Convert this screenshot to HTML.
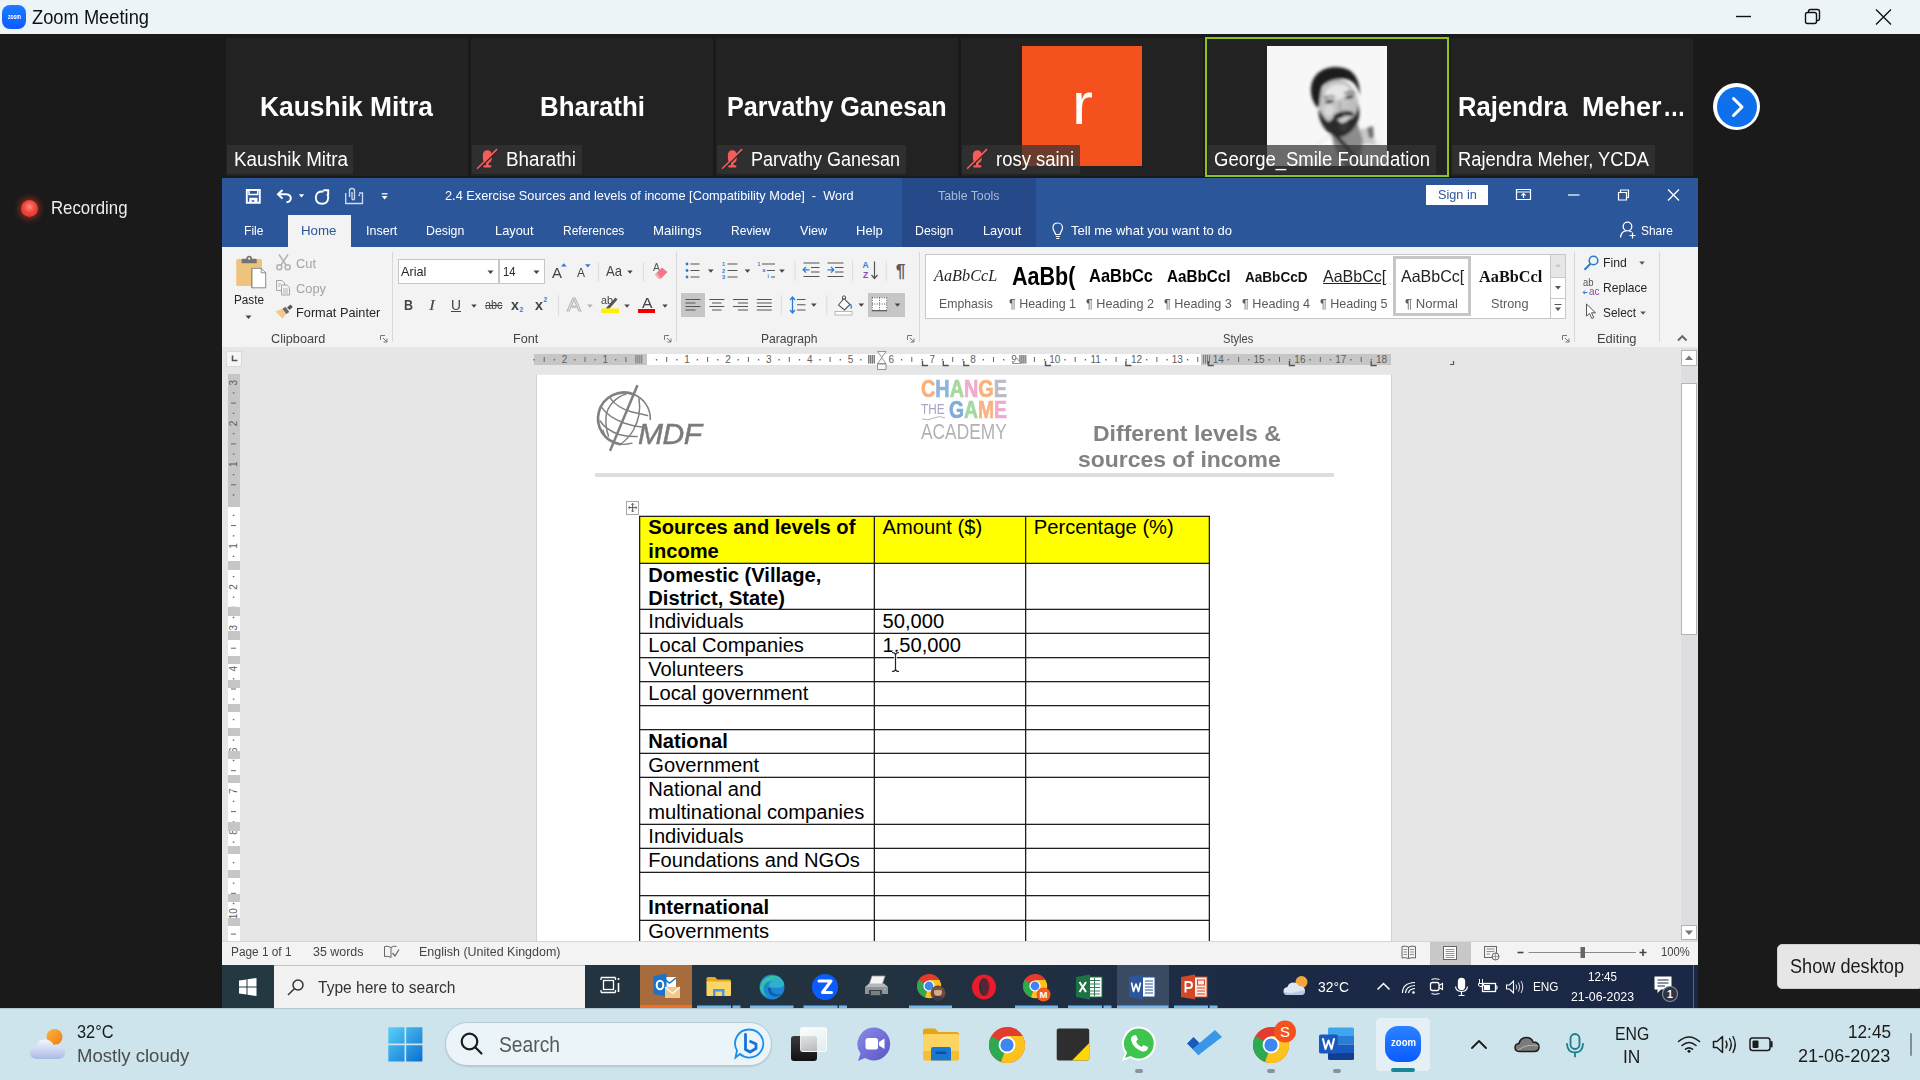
<!DOCTYPE html>
<html lang="en"><head><meta charset="utf-8"><title>Zoom Meeting</title>
<style>
*{box-sizing:border-box;margin:0;padding:0}
html,body{width:1920px;height:1080px;overflow:hidden;background:#1a1a1a;font-family:"Liberation Sans",sans-serif;}
.a{position:absolute;white-space:nowrap;line-height:1}
.t{position:absolute;white-space:nowrap;line-height:1;transform-origin:0 0}
svg{position:absolute;overflow:visible}
#zt{left:0;top:0;width:1920px;height:34px;background:#edf4f8}
.tile{position:absolute;top:38px;height:138px;background:#222222}
.lbl{position:absolute;left:1px;bottom:2.5px;height:29px;background:rgba(52,52,52,.72);border-radius:1px}
.w{color:#fff}
.gl{color:#444;font-size:12.5px}
</style></head><body>
<!-- Zoom title bar -->
<div class="a" id="zt"></div>
<div class="a" style="left:2px;top:5px;width:24px;height:24px;border-radius:8px;background:linear-gradient(180deg,#1f7bff,#0b5cff)"></div>
<span class="t" style="transform:scaleX(0.7111);left:7.5px;top:13px;font-size:7px;color:#fff;font-weight:bold">zoom</span>
<span class="t" style="transform:scaleX(0.9387);left:32px;top:8px;font-size:19.5px;color:#111">Zoom Meeting</span>
<svg style="left:1730px;top:4px" width="180" height="28" viewBox="0 0 180 28" fill="none" stroke="#111" stroke-width="1.4">
<path d="M6 12.5H21"/><rect x="75.5" y="8.5" width="11" height="11" rx="2"/><path d="M78.5 8.5V7.5Q78.5 5.5 80.5 5.5H87.5Q89.5 5.5 89.5 7.5V14.5Q89.5 16.5 87.5 16.5H86.5"/><path d="M146 5.5L161 20.5M161 5.5L146 20.5"/></svg>

<!-- participant tiles -->
<div class="tile" style="left:226px;width:242px"><div class="lbl" style="width:126px"></div></div>
<div class="tile" style="left:471px;width:242px"><div class="lbl" style="width:110px"></div></div>
<div class="tile" style="left:716px;width:242px"><div class="lbl" style="width:189px"></div></div>
<div class="tile" style="left:961px;width:242px"><div class="a" style="left:61px;top:8px;width:120px;height:120px;background:#f4511e"></div><div class="lbl" style="width:118px"></div></div>
<div class="tile" style="left:1205px;top:37px;width:244px;height:140px;border:2px solid #8cc321;background:#222"><div class="a" style="left:60px;top:7px;width:120px;height:120px;background:#f2f2f2;overflow:hidden">
<svg style="left:0;top:0" width="120" height="120" viewBox="0 0 120 120">
<defs><filter id="fb" x="-10%" y="-10%" width="120%" height="120%"><feGaussianBlur stdDeviation="1.5"/></filter><filter id="fb2"><feGaussianBlur stdDeviation="2.6"/></filter></defs>
<rect width="120" height="120" fill="#f7f7f7"/>
<g filter="url(#fb)">
<path d="M34 122C38 104 52 94 62 88L96 82C106 88 116 96 122 106V122Z" fill="#f1f1f1"/>
<path d="M40 112Q52 98 64 92L70 104Q60 110 56 122H36Z" fill="#fcfcfc"/>
<path d="M92 84Q100 80 104 86L110 100Q100 96 94 100Z" fill="#c9c9c9"/>
<path d="M100 82L106 80L107 92L102 92Z" fill="#6e6e6e"/>
<path d="M64 86L90 76L96 94L92 122H78L66 98Z" fill="#8c8c8c"/>
<path d="M66 89L69 87L91 111L89 115Z" fill="#2a2a2a"/>
<ellipse cx="72" cy="58" rx="19.5" ry="26" transform="rotate(-13 72 58)" fill="#c4c4c4"/>
<ellipse cx="70" cy="46" rx="12" ry="7.5" transform="rotate(-13 70 46)" fill="#e6e6e6"/>
<ellipse cx="62" cy="64" rx="5" ry="6" fill="#d8d8d8"/><ellipse cx="86" cy="59" rx="4" ry="6" fill="#bdbdbd"/>
<path d="M52 62C50 72 56 84 66 90C76 94 88 86 92 72C93 66 92 62 91 58C90 68 86 74 80 73C74 68 66 70 62 76C56 72 54 66 52 62Z" fill="#2b2b2b"/>
<path d="M66 70Q74 63 86 66Q88 70 84 70Q76 68 68 74Z" fill="#1d1d1d"/>
<path d="M70 73Q77 71 83 71Q80 77 74 77Z" fill="#d2d2d2"/>
<path d="M72 80Q78 80 82 77Q82 84 76 85Q72 84 72 80Z" fill="#3a3a3a"/>
<path d="M49 60C42 50 42 36 50 28C58 20 72 19 82 24C90 29 93 38 93 50C91 41 87 35 80 33.5C70 32 60 35 55 41C53 48 53 55 52 62Z" fill="#1c1c1c"/>
<ellipse cx="62.5" cy="55.5" rx="4.5" ry="1.8" transform="rotate(-12 62.5 55.5)" fill="#3c3c3c"/><ellipse cx="82.5" cy="51" rx="4.5" ry="1.8" transform="rotate(-12 82.5 51)" fill="#3c3c3c"/>
<path d="M57 52Q62 49 68 51" stroke="#555" stroke-width="1.6" fill="none"/><path d="M77 47.5Q83 45 88 47" stroke="#555" stroke-width="1.6" fill="none"/>
<path d="M73 56Q72 62 74 65Q77 66 80 64" stroke="#9a9a9a" stroke-width="1.5" fill="none"/>
</g>
</svg></div><div class="lbl" style="left:1px;bottom:1px;width:228px"></div></div>
<div class="tile" style="left:1451px;width:242px"><div class="lbl" style="width:203px"></div></div>

<span class="t w" style="transform:scaleX(0.9422);left:260px;top:93px;font-size:28px;font-weight:bold">Kaushik Mitra</span>
<span class="t w" style="transform:scaleX(0.9245);left:540px;top:93px;font-size:28px;font-weight:bold">Bharathi</span>
<span class="t w" style="transform:scaleX(0.8983);left:726.5px;top:93px;font-size:28px;font-weight:bold">Parvathy Ganesan</span>
<span class="t w" style="transform:scaleX(0.9138);left:1458.3px;top:93px;font-size:28px;font-weight:bold">Rajendra</span><span class="t w" style="transform:scaleX(0.9640);left:1581.5px;top:93px;font-size:28px;font-weight:bold">Meher</span><span class="t w" style="transform:scaleX(0.8161);left:1663.5px;top:93px;font-size:28px;font-weight:bold;letter-spacing:1px">...</span>
<span class="t w" style="transform:scaleX(1.0508);left:1071.5px;top:74px;font-size:60px">r</span>

<span class="t w" style="transform:scaleX(0.9651);left:233.5px;top:150px;font-size:19.5px">Kaushik Mitra</span>
<span class="t w" style="transform:scaleX(0.9636);left:505.5px;top:150px;font-size:19.5px">Bharathi</span>
<span class="t w" style="transform:scaleX(0.9225);left:750.5px;top:150px;font-size:19.5px">Parvathy Ganesan</span>
<span class="t w" style="transform:scaleX(0.9469);left:995.5px;top:150px;font-size:19.5px">rosy saini</span>
<span class="t w" style="transform:scaleX(0.9489);left:1213.5px;top:150px;font-size:19.5px">George_Smile Foundation</span>
<span class="t w" style="transform:scaleX(0.9389);left:1458px;top:150px;font-size:19.5px">Rajendra Meher, YCDA</span>

<!-- muted mic icons -->
<svg style="left:476px;top:148px" width="22" height="22" viewBox="0 0 22 22"><g fill="#f75c5c"><rect x="6.9" y="2.2" width="8.8" height="13" rx="4.4"/><rect x="10" y="14.5" width="2.6" height="3.5"/><rect x="7.2" y="17.2" width="8.2" height="2.2" rx=".8"/></g><path d="M22.3 1.6L2.3 21.3" stroke="#2b2b2b" stroke-width="1.8"/><path d="M21.1 1.1L1.1 20.8" stroke="#f75c5c" stroke-width="1.6"/></svg>
<svg style="left:721px;top:148px" width="22" height="22" viewBox="0 0 22 22"><g fill="#f75c5c"><rect x="6.9" y="2.2" width="8.8" height="13" rx="4.4"/><rect x="10" y="14.5" width="2.6" height="3.5"/><rect x="7.2" y="17.2" width="8.2" height="2.2" rx=".8"/></g><path d="M22.3 1.6L2.3 21.3" stroke="#2b2b2b" stroke-width="1.8"/><path d="M21.1 1.1L1.1 20.8" stroke="#f75c5c" stroke-width="1.6"/></svg>
<svg style="left:966px;top:148px" width="22" height="22" viewBox="0 0 22 22"><g fill="#f75c5c"><rect x="6.9" y="2.2" width="8.8" height="13" rx="4.4"/><rect x="10" y="14.5" width="2.6" height="3.5"/><rect x="7.2" y="17.2" width="8.2" height="2.2" rx=".8"/></g><path d="M22.3 1.6L2.3 21.3" stroke="#2b2b2b" stroke-width="1.8"/><path d="M21.1 1.1L1.1 20.8" stroke="#f75c5c" stroke-width="1.6"/></svg>

<!-- next arrow -->
<div class="a" style="left:1713px;top:83px;width:47px;height:47px;border-radius:50%;background:#fff"></div>
<div class="a" style="left:1716.5px;top:86.5px;width:40px;height:40px;border-radius:50%;background:#0e71eb"></div>
<svg style="left:1716.5px;top:86.5px" width="40" height="40" viewBox="0 0 40 40" fill="none" stroke="#fff" stroke-width="3" stroke-linecap="round" stroke-linejoin="round"><path d="M16.5 11.5L25 20L16.5 28.5"/></svg>

<!-- recording -->
<div class="a" style="left:21px;top:199.5px;width:17px;height:17px;border-radius:50%;background:radial-gradient(circle at 50% 40%,#ff8a80 0,#f0443a 45%,#e0362e 100%);box-shadow:0 0 6px 2px rgba(230,60,40,.55)"></div>
<span class="t" style="transform:scaleX(0.9072);left:51px;top:199.2px;font-size:18.5px;color:#ededed">Recording</span>
<!-- Word window chrome -->
<div class="a" style="left:222px;top:178px;width:1476px;height:69px;background:#2b579a"></div>
<div class="a" style="left:902px;top:178px;width:133.5px;height:69px;background:#26498a"></div>
<div class="a" style="left:288px;top:215px;width:62.5px;height:33px;background:#f3f3f3"></div>
<!-- QAT icons -->
<svg style="left:240px;top:182px" width="160" height="28" viewBox="0 0 160 28" fill="none" stroke="#fff" stroke-width="1.9">
<path d="M6.8 8H19.8V20.8H6.8Z"/><path d="M9 8.5V12.5H17.7V8.5" stroke-width="1.5"/><path d="M9.3 15.8H17.5V20.5H14.2V18.3H11.7V20.5H9.3Z" fill="#fff" stroke="none"/>
<path d="M42.5 8L38 12.3L42.5 16.6" stroke-width="2" stroke-linejoin="miter"/><path d="M38.5 12.3H46Q51 12.8 50.8 16.5Q50.5 19.8 46.5 20.3" stroke-width="2"/>
<path d="M58.8 12.3L61.5 15.6L64.2 12.3Z" fill="#fff" stroke="none"/>
<path d="M83.5 9.5Q76 9 75.8 15.5Q76 21.7 82 21.7Q88 21.7 88.2 15.5Q88.2 13.5 87 12" stroke-width="1.9"/><path d="M83.3 8.3H88.2V13.2" stroke-width="1.9"/>
<path d="M105.7 11V21.5H122.5V11H119" stroke="#cfdcf2" stroke-width="1.3"/><path d="M109.5 15V8.5Q109.5 6.5 112 6.5Q114.5 6.5 114.5 8.5V16.5Q114.5 17.8 113.2 17.8Q112 17.8 112 16.5V10" stroke="#cfdcf2" stroke-width="1.3"/><circle cx="119.3" cy="13.2" r=".9" fill="#cfdcf2" stroke="none"/>
<path d="M141.7 11.8H147.5" stroke-width="1.3"/><path d="M141.7 14L144.6 17.6L147.5 14Z" fill="#fff" stroke="none"/>
</svg>
<span class="t w" style="transform:scaleX(0.9821);left:444.5px;top:188.5px;font-size:13px">2.4 Exercise Sources and levels of income [Compatibility Mode]&nbsp; -&nbsp; Word</span>
<span class="t" style="transform:scaleX(0.9489);left:938px;top:189px;font-size:13px;color:#a9bad6">Table Tools</span>
<!-- tabs -->
<span class="t w" style="transform:scaleX(0.8959);left:243.8px;top:224px;font-size:13.5px">File</span>
<span class="t" style="transform:scaleX(0.9857);left:301.3px;top:224px;font-size:13.5px;color:#2b579a">Home</span>
<span class="t w" style="transform:scaleX(0.9270);left:365.8px;top:224px;font-size:13.5px">Insert</span>
<span class="t w" style="transform:scaleX(0.9112);left:426.3px;top:224px;font-size:13.5px">Design</span>
<span class="t w" style="transform:scaleX(0.9495);left:494.5px;top:224px;font-size:13.5px">Layout</span>
<span class="t w" style="transform:scaleX(0.8878);left:562.5px;top:224px;font-size:13.5px">References</span>
<span class="t w" style="transform:scaleX(0.9792);left:653.3px;top:224px;font-size:13.5px">Mailings</span>
<span class="t w" style="transform:scaleX(0.8923);left:731.3px;top:224px;font-size:13.5px">Review</span>
<span class="t w" style="transform:scaleX(0.9300);left:800px;top:224px;font-size:13.5px">View</span>
<span class="t w" style="transform:scaleX(0.9652);left:856.3px;top:224px;font-size:13.5px">Help</span>
<span class="t w" style="transform:scaleX(0.9112);left:915px;top:224px;font-size:13.5px">Design</span>
<span class="t w" style="transform:scaleX(0.9446);left:983px;top:224px;font-size:13.5px">Layout</span>
<svg style="left:1050px;top:221px" width="16" height="20" viewBox="0 0 16 20" fill="none" stroke="#fff" stroke-width="1.2"><path d="M5.5 13.5C5.5 11 3 10 3 6.8C3 4 5 2 7.8 2C10.5 2 12.5 4 12.5 6.8C12.5 10 10 11 10 13.5Z"/><path d="M5.8 15.5H9.8M6.3 17.5H9.3"/></svg>
<span class="t w" style="transform:scaleX(0.9664);left:1071.3px;top:224px;font-size:13.5px">Tell me what you want to do</span>
<!-- right controls -->
<div class="a" style="left:1425.8px;top:185px;width:62.5px;height:20px;background:#fff"></div>
<span class="t" style="transform:scaleX(0.9399);left:1437.5px;top:188px;font-size:13.5px;color:#2b579a">Sign in</span>
<svg style="left:1510px;top:184px" width="180" height="22" viewBox="0 0 180 22" fill="none" stroke="#fff" stroke-width="1.2">
<path d="M6.5 5.5H20.5V15.5H6.5ZM6.5 8H20.5"/><path d="M13.5 14V9.8M11.5 11.5L13.5 9.5L15.5 11.5" stroke-width="1.1"/>
<path d="M58 11H69.5"/>
<path d="M108.5 8.5H116.5V16H108.5ZM110.5 8.5V6H118.5V13.5H116.5"/>
<path d="M158 5.5L169 16.5M169 5.5L158 16.5" stroke-width="1.3"/>
</svg>
<svg style="left:1618px;top:220px" width="20" height="20" viewBox="0 0 20 20" fill="none" stroke="#fff" stroke-width="1.3"><circle cx="9.5" cy="6.5" r="4.3"/><path d="M2.5 17.5Q3 11.5 8 10.8M11 10.8Q12.5 11 13.5 12"/><path d="M14.5 12.5V18.5M11.5 15.5H17.5" stroke-width="1.2"/></svg>
<span class="t w" style="transform:scaleX(0.8826);left:1640.8px;top:224px;font-size:13.5px">Share</span>
<!-- ribbon body -->
<div class="a" style="left:222px;top:247px;width:1476px;height:100.7px;background:#f3f3f3;border-bottom:1px solid #dadada"></div>
<!-- group separators -->
<div class="a" style="left:392px;top:252px;width:1px;height:90px;background:#d8d8d8"></div>
<div class="a" style="left:676px;top:252px;width:1px;height:90px;background:#d8d8d8"></div>
<div class="a" style="left:919px;top:252px;width:1px;height:90px;background:#d8d8d8"></div>
<div class="a" style="left:1574px;top:252px;width:1px;height:90px;background:#d8d8d8"></div>
<div class="a" style="left:1659px;top:252px;width:1px;height:90px;background:#d8d8d8"></div>
<!-- Clipboard -->
<svg style="left:234px;top:255px" width="36" height="36" viewBox="0 0 36 36">
<rect x="2.2" y="3.9" width="25.8" height="27" rx="1.6" fill="#eec47c"/><path d="M7.6 4.5Q7.6 3.8 8.3 3.8H12.3Q12.5 .8 15.2 .8Q17.9 .8 18.1 3.8H22Q22.7 3.8 22.7 4.5V8.3H7.6Z" fill="#737373"/><circle cx="15.2" cy="3.6" r="1.1" fill="#fff"/>
<path d="M17.8 13.3H27.2L31.7 17.8V32.8H17.8Z" fill="#fff" stroke="#8a8a8a" stroke-width="1"/><path d="M17.8 13.3V32.8" stroke="#8a9468" stroke-width="1"/><path d="M27.2 13.3V17.8H31.7" fill="none" stroke="#8a8a8a" stroke-width="1"/></svg>
<span class="t" style="transform:scaleX(0.8688);left:234.3px;top:292.7px;font-size:13.5px;color:#262626">Paste</span>
<svg style="left:245px;top:315px" width="8" height="5" viewBox="0 0 8 5"><path d="M.5 .5L3.5 4L6.5 .5Z" fill="#444"/></svg>
<svg style="left:275px;top:253px" width="18" height="19" viewBox="0 0 18 19" fill="none" stroke="#b2b2b2" stroke-width="1.5"><path d="M4 1.5L11 12M13 1.5L6 12"/><circle cx="4.3" cy="14.3" r="2.5"/><circle cx="12.7" cy="14.3" r="2.5"/></svg>
<span class="t" style="transform:scaleX(0.9517);left:295.8px;top:256.5px;font-size:13.5px;color:#a3a3a3">Cut</span>
<svg style="left:275px;top:279px" width="18" height="18" viewBox="0 0 18 18" fill="#f3f3f3" stroke="#a6a6a6" stroke-width="1"><path d="M1.5 1.5H7L9.5 4V11.5H1.5Z"/><path d="M6.5 6H12L14.5 8.5V16H6.5Z"/><path d="M8 10H13M8 12H13M8 14H13M3 5H6M3 7H5" stroke-width=".8"/></svg>
<span class="t" style="transform:scaleX(0.9519);left:295.8px;top:281.6px;font-size:13.5px;color:#a3a3a3">Copy</span>
<svg style="left:275px;top:303px" width="20" height="18" viewBox="0 0 20 18"><path d="M.5 8.5L8 5.5L11.5 10.5L7.5 15.5Z" fill="#f0c88a"/><path d="M7.5 5.8L10.5 3.8L14.3 9L11.3 11Z" fill="#6a6a6a"/><path d="M12 4.5L15.5 1.5L17.8 4L14.5 7Z" fill="#585858"/></svg>
<span class="t" style="transform:scaleX(0.9442);left:295.8px;top:306.4px;font-size:13.5px;color:#262626">Format Painter</span>
<span class="t gl" style="transform:scaleX(0.9756);left:271.3px;top:331.9px;font-size:13px">Clipboard</span>
<svg style="left:380px;top:335px" width="8" height="8" viewBox="0 0 8 8" fill="none" stroke="#777" stroke-width="1" id="dl"><path d="M.5 5V.5H5M3 3L7 7M7 3.5V7H3.5"/></svg>
<!-- Font group -->
<div class="a" style="left:397.5px;top:259px;width:101px;height:24.8px;background:#fff;border:1px solid #c6c6c6"></div>
<div class="a" style="left:499.3px;top:259px;width:45.5px;height:24.8px;background:#fff;border:1px solid #c6c6c6"></div>
<span class="t" style="transform:scaleX(0.9365);left:400.5px;top:265px;font-size:13.5px;color:#262626">Arial</span>
<span class="t" style="transform:scaleX(0.8316);left:502.5px;top:265px;font-size:13.5px;color:#262626">14</span>
<svg style="left:486.5px;top:269.5px" width="8" height="5" viewBox="0 0 8 5"><path d="M.5 .5L3.5 4L6.5 .5Z" fill="#444"/></svg>
<svg style="left:533.3px;top:269.5px" width="8" height="5" viewBox="0 0 8 5"><path d="M.5 .5L3.5 4L6.5 .5Z" fill="#444"/></svg>
<span class="t" style="transform:scaleX(0.9984);left:551.5px;top:264.5px;font-size:15px;color:#444">A</span>
<svg style="left:560.5px;top:263px" width="6" height="4" viewBox="0 0 6 4"><path d="M0 3.5L2.8 .3L5.6 3.5Z" fill="#2b7cd3"/></svg>
<span class="t" style="transform:scaleX(0.9225);left:576.5px;top:266px;font-size:13px;color:#444">A</span>
<svg style="left:584.5px;top:263.5px" width="6" height="4" viewBox="0 0 6 4"><path d="M0 .3L2.8 3.5L5.6 .3Z" fill="#2b7cd3"/></svg>
<div class="a" style="left:597.5px;top:262px;width:1px;height:20px;background:#dcdcdc"></div>
<span class="t" style="transform:scaleX(0.9014);left:606px;top:263.5px;font-size:14.5px;color:#444">Aa</span>
<svg style="left:626.5px;top:269.5px" width="7" height="5" viewBox="0 0 7 5"><path d="M.3 .5L3 3.8L5.7 .5Z" fill="#444"/></svg>
<div class="a" style="left:642.5px;top:262px;width:1px;height:20px;background:#dcdcdc"></div>
<span class="t" style="transform:scaleX(0.9532);left:653px;top:262px;font-size:11px;color:#555">A</span>
<svg style="left:652px;top:264px" width="18" height="16" viewBox="0 0 18 16"><path d="M3 10.5L10 3.5L15.5 8L9 14.5H6.5Z" fill="#f0768b"/><path d="M3 10.5L6.5 14.5H9L5 9Z" fill="#f6a9b6"/></svg>
<!-- row 2 -->
<span class="t" style="transform:scaleX(0.8584);left:403.5px;top:297.5px;font-size:14.5px;font-weight:bold;color:#444">B</span>
<span class="t" style="transform:scaleX(1.2387);left:429px;top:297.5px;font-size:14.5px;font-style:italic;font-family:'Liberation Serif',serif;color:#444">I</span>
<span class="t" style="transform:scaleX(0.9877);left:450.5px;top:297.5px;font-size:14px;color:#444;text-decoration:underline">U</span>
<svg style="left:470.5px;top:303.5px" width="7" height="5" viewBox="0 0 7 5"><path d="M.3 .5L3 3.8L5.7 .5Z" fill="#444"/></svg>
<span class="t" style="transform:scaleX(0.8682);left:484.5px;top:299px;font-size:12.5px;color:#444;text-decoration:line-through">abc</span>
<span class="t" style="transform:scaleX(0.9903);left:510.5px;top:297.5px;font-size:14.5px;font-weight:bold;color:#444">x</span><span class="t" style="left:519.5px;top:306.5px;font-size:6.5px;color:#2b7cd3;font-weight:bold">2</span>
<span class="t" style="transform:scaleX(0.9903);left:534.5px;top:297.5px;font-size:14.5px;font-weight:bold;color:#444">x</span><span class="t" style="left:543.5px;top:297px;font-size:6.5px;color:#2b7cd3;font-weight:bold">2</span>
<div class="a" style="left:557.5px;top:295px;width:1px;height:21px;background:#dcdcdc"></div>
<span class="t" style="transform:scaleX(1.1034);left:567px;top:295px;font-size:19px;color:#f3f3f3;-webkit-text-stroke:1px #b9b9b9">A</span>
<svg style="left:587px;top:303.5px" width="7" height="5" viewBox="0 0 7 5"><path d="M.3 .5L3 3.8L5.7 .5Z" fill="#b0b0b0"/></svg>
<span class="t" style="transform:scaleX(0.9796);left:601px;top:294.5px;font-size:11px;color:#444">ab</span>
<svg style="left:601px;top:294px" width="20" height="20" viewBox="0 0 20 20"><path d="M5.5 13.5L14.5 3.5L16.5 5.5L8.5 14.5L5 15Z" fill="#555"/><rect x="0" y="14.5" width="18" height="4.5" fill="#ffef00"/></svg>
<svg style="left:624px;top:303.5px" width="7" height="5" viewBox="0 0 7 5"><path d="M.3 .5L3 3.8L5.7 .5Z" fill="#444"/></svg>
<span class="t" style="transform:scaleX(1.0856);left:641.5px;top:296px;font-size:14.5px;color:#444">A</span>
<div class="a" style="left:638px;top:309px;width:17.3px;height:4px;background:#ee0000"></div>
<svg style="left:661.5px;top:303.5px" width="7" height="5" viewBox="0 0 7 5"><path d="M.3 .5L3 3.8L5.7 .5Z" fill="#444"/></svg>
<span class="t gl" style="transform:scaleX(0.9725);left:513px;top:331.9px;font-size:13px">Font</span>
<svg style="left:664px;top:335px" width="8" height="8" viewBox="0 0 8 8" fill="none" stroke="#777" stroke-width="1"><path d="M.5 5V.5H5M3 3L7 7M7 3.5V7H3.5"/></svg>
<!-- Paragraph group -->
<div class="a" style="left:681.3px;top:292.5px;width:23.7px;height:24.5px;background:#c6c6c6"></div>
<div class="a" style="left:868px;top:292.5px;width:37px;height:24.5px;background:#c6c6c6"></div>
<svg style="left:680px;top:258px" width="240" height="62" viewBox="0 0 240 62" fill="none">
<!-- bullets -->
<g fill="#2b7cd3"><circle cx="7" cy="6" r="1.4"/><circle cx="7" cy="12.5" r="1.4"/><circle cx="7" cy="19" r="1.4"/></g>
<path d="M10.5 6H19.5M10.5 12.5H19.5M10.5 19H19.5" stroke="#555" stroke-width="1.1"/>
<path d="M28 11.5L30.8 14.8L33.6 11.5Z" fill="#444"/>
<!-- numbering -->
<g fill="#2b7cd3" font-size="5.5" font-family="Liberation Sans,sans-serif" font-weight="bold"><text x="42" y="8">1</text><text x="42" y="14.5">2</text><text x="42" y="21">3</text></g>
<path d="M47.5 6H57.5M47.5 12.5H57.5M47.5 19H57.5" stroke="#555" stroke-width="1.1"/>
<path d="M64.7 11.5L67.5 14.8L70.3 11.5Z" fill="#444"/>
<!-- multilevel -->
<g fill="#2b7cd3" font-size="5" font-family="Liberation Sans,sans-serif" font-weight="bold"><text x="77.5" y="7.5">1</text><text x="82.5" y="13.5">a</text><text x="87.5" y="20">i</text></g>
<path d="M82 6H95M87 12.5H95M91 19H95" stroke="#555" stroke-width="1.1"/>
<path d="M99.2 11.5L102 14.8L104.8 11.5Z" fill="#444"/>
<path d="M115 3V23M172.5 3V23M206.3 3V23" stroke="#dcdcdc" stroke-width="1"/>
<!-- dec indent -->
<path d="M123.5 5H139.5M131 9.5H139.5M131 14H139.5M123.5 18.5H139.5" stroke="#555" stroke-width="1.1"/>
<path d="M129.5 11.8H123.5M126 9L123.2 11.8L126 14.6" stroke="#2b7cd3" stroke-width="1.3"/>
<!-- inc indent -->
<path d="M147.5 5H163.5M155 9.5H163.5M155 14H163.5M147.5 18.5H163.5" stroke="#555" stroke-width="1.1"/>
<path d="M147.5 11.8H153.5M151 9L153.8 11.8L151 14.6" stroke="#2b7cd3" stroke-width="1.3"/>
<!-- sort -->
<g font-size="8.5" font-family="Liberation Sans,sans-serif" font-weight="bold"><text x="182.5" y="10" fill="#2b7cd3">A</text><text x="183" y="19.5" fill="#8e44ad">Z</text></g>
<path d="M194.5 3.5V20M191.5 17L194.5 20.5L197.5 17" stroke="#555" stroke-width="1.2"/>
<!-- pilcrow -->
<g font-size="17.5" font-weight="bold" font-family="Liberation Sans,sans-serif"><text x="215.8" y="19" fill="#5c5c5c">¶</text></g>
<!-- row2: alignments -->
<path d="M5.5 41.5H20.5M5.5 45H15.5M5.5 48.5H20.5M5.5 52H15.5" stroke="#555" stroke-width="1.1"/>
<path d="M29.3 41.5H44.3M32 45H41.5M29.3 48.5H44.3M32 52H41.5" stroke="#555" stroke-width="1.1"/>
<path d="M53 41.5H68M58 45H68M53 48.5H68M58 52H68" stroke="#555" stroke-width="1.1"/>
<path d="M76.8 41.5H91.8M76.8 45H91.8M76.8 48.5H91.8M76.8 52H91.8" stroke="#555" stroke-width="1.1"/>
<path d="M101.3 37V58M146.8 37V58" stroke="#dcdcdc" stroke-width="1"/>
<!-- line spacing -->
<path d="M117 41.5H125.5M117 46.8H125.5M117 52H125.5" stroke="#555" stroke-width="1.1"/>
<path d="M112.5 39.5V54.5M110 42L112.5 39L115 42M110 52L112.5 55L115 52" stroke="#2b7cd3" stroke-width="1.3"/>
<path d="M131 45.5L133.8 48.8L136.6 45.5Z" fill="#444"/>
<!-- shading -->
<path d="M158.5 47L164 40.5L170 46.5L164.5 52Z" fill="#fafafa" stroke="#555" stroke-width="1.1"/><path d="M162.5 42V38.5Q164 37 165.5 38.5V41" stroke="#555" stroke-width="1"/><path d="M170.5 46Q172 49 170.8 50.5" stroke="#2b7cd3" stroke-width="1.3"/>
<rect x="155" y="53.5" width="17" height="3.5" fill="#fff" stroke="#a0a0a0" stroke-width=".7"/>
<path d="M178.5 45.5L181.3 48.8L184.1 45.5Z" fill="#444"/>
<!-- borders -->
<rect x="192" y="39.5" width="15" height="13" fill="#fff"/><path d="M192 39.8H207M192 46H207M192.3 39.5V52.5M199.5 39.5V52.5M206.7 39.5V52.5" stroke="#555" stroke-width="1" stroke-dasharray="1 1.4"/><path d="M192 52.7H207" stroke="#555" stroke-width="1.2"/>
<path d="M214.7 45.5L217.5 48.8L220.3 45.5Z" fill="#444"/>
</svg>
<span class="t gl" style="transform:scaleX(0.9305);left:760.5px;top:331.9px;font-size:13px">Paragraph</span>
<svg style="left:907px;top:335px" width="8" height="8" viewBox="0 0 8 8" fill="none" stroke="#777" stroke-width="1"><path d="M.5 5V.5H5M3 3L7 7M7 3.5V7H3.5"/></svg>
<!-- Styles gallery -->
<div class="a" style="left:924.8px;top:254px;width:641.2px;height:64.5px;background:#fff;border:1px solid #c8c8c8"></div>
<div class="a" style="left:1550px;top:254px;width:16px;height:64.5px;background:#fff;border:1px solid #c8c8c8"></div>
<div class="a" style="left:1551px;top:255px;width:14px;height:22px;background:#e6e6e6"></div>
<div class="a" style="left:1550px;top:277px;width:16px;height:1px;background:#c8c8c8"></div>
<div class="a" style="left:1550px;top:298px;width:16px;height:1px;background:#c8c8c8"></div>
<svg style="left:1550px;top:255px" width="16" height="64" viewBox="0 0 16 64"><path d="M5 12L8 8.5L11 12Z" fill="#c8c8c8"/><path d="M5 31L8 34.5L11 31Z" fill="#555"/><path d="M4.5 49.5H11.5" stroke="#555" stroke-width="1"/><path d="M5 52.5L8 56L11 52.5Z" fill="#555"/></svg>
<div class="a" style="left:1393.3px;top:256.3px;width:77.5px;height:59.5px;border:3px solid #c6c6c6;background:#fff"></div>
<span class="t" style="transform:scaleX(0.9575);left:933.8px;top:267px;font-size:17px;font-family:'Liberation Serif',serif;font-style:italic;color:#262626">AaBbCcL</span>
<span class="t" style="transform:scaleX(0.8599);left:1011.8px;top:263.5px;font-size:25px;font-weight:bold;color:#000">AaBb(</span>
<span class="t" style="transform:scaleX(0.8660);left:1089.3px;top:266px;font-size:19px;font-weight:bold;color:#000">AaBbCc</span>
<span class="t" style="transform:scaleX(0.9234);left:1167px;top:268px;font-size:16.5px;font-weight:bold;color:#000">AaBbCcI</span>
<span class="t" style="transform:scaleX(0.8743);left:1245px;top:269px;font-size:15.5px;font-weight:bold;color:#111">AaBbCcD</span>
<span class="t" style="transform:scaleX(0.9720);left:1323px;top:268px;font-size:16.5px;color:#222;text-decoration:underline">AaBbCc[</span>
<span class="t" style="transform:scaleX(0.9720);left:1400.5px;top:268px;font-size:16.5px;color:#222">AaBbCc[</span>
<span class="t" style="transform:scaleX(0.9573);left:1478.8px;top:267.5px;font-size:17px;font-weight:bold;font-family:'Liberation Serif',serif;color:#111">AaBbCcl</span>
<span class="t" style="transform:scaleX(0.9075);left:938.8px;top:296.8px;font-size:13.5px;color:#5a5a5a">Emphasis</span>
<span class="t" style="transform:scaleX(0.9233);left:1008.8px;top:296.8px;font-size:13.5px;color:#5a5a5a">¶ Heading 1</span>
<span class="t" style="transform:scaleX(0.9371);left:1086.3px;top:296.8px;font-size:13.5px;color:#5a5a5a">¶ Heading 2</span>
<span class="t" style="transform:scaleX(0.9344);left:1164.3px;top:296.8px;font-size:13.5px;color:#5a5a5a">¶ Heading 3</span>
<span class="t" style="transform:scaleX(0.9371);left:1242px;top:296.8px;font-size:13.5px;color:#5a5a5a">¶ Heading 4</span>
<span class="t" style="transform:scaleX(0.9302);left:1320px;top:296.8px;font-size:13.5px;color:#5a5a5a">¶ Heading 5</span>
<span class="t" style="transform:scaleX(0.9722);left:1405px;top:296.8px;font-size:13.5px;color:#5a5a5a">¶ Normal</span>
<span class="t" style="transform:scaleX(0.9427);left:1490.5px;top:296.8px;font-size:13.5px;color:#5a5a5a">Strong</span>
<span class="t gl" style="transform:scaleX(0.8558);left:1223px;top:331.9px;font-size:13px">Styles</span>
<svg style="left:1562px;top:335px" width="8" height="8" viewBox="0 0 8 8" fill="none" stroke="#777" stroke-width="1"><path d="M.5 5V.5H5M3 3L7 7M7 3.5V7H3.5"/></svg>
<!-- Editing -->
<svg style="left:1582px;top:254px" width="20" height="18" viewBox="0 0 20 18" fill="none"><circle cx="11.5" cy="6.5" r="4.3" stroke="#2b7cd3" stroke-width="1.6"/><path d="M8.5 9.8L2.5 15.8" stroke="#2b7cd3" stroke-width="2"/></svg>
<span class="t" style="transform:scaleX(0.9061);left:1603.3px;top:256px;font-size:13.5px;color:#262626">Find</span>
<svg style="left:1638.5px;top:261px" width="7" height="5" viewBox="0 0 7 5"><path d="M.3 .5L3 3.8L5.7 .5Z" fill="#555"/></svg>
<span class="t" style="transform:scaleX(0.8984);left:1582.5px;top:277px;font-size:10.5px;color:#555">ab</span>
<span class="t" style="transform:scaleX(0.9465);left:1588.5px;top:285.5px;font-size:10.5px;color:#8e44ad">ac</span>
<svg style="left:1582px;top:288px" width="7" height="6" viewBox="0 0 7 6"><path d="M5.5 4.5H1.5M3 2.5L1 4.5L3 6" stroke="#2b7cd3" stroke-width="1" fill="none"/></svg>
<span class="t" style="transform:scaleX(0.8944);left:1603.3px;top:281px;font-size:13.5px;color:#262626">Replace</span>
<svg style="left:1585px;top:303px" width="12" height="17" viewBox="0 0 12 17"><path d="M1.5 1L1.5 13L4.5 10.5L6.8 15.5L8.8 14.5L6.5 9.8H10.5Z" fill="#fff" stroke="#555" stroke-width="1"/></svg>
<span class="t" style="transform:scaleX(0.8793);left:1603.3px;top:306px;font-size:13.5px;color:#262626">Select</span>
<svg style="left:1639.5px;top:311px" width="7" height="5" viewBox="0 0 7 5"><path d="M.3 .5L3 3.8L5.7 .5Z" fill="#555"/></svg>
<span class="t gl" style="transform:scaleX(0.9937);left:1596.8px;top:331.9px;font-size:13px">Editing</span>
<svg style="left:1677px;top:334px" width="11" height="8" viewBox="0 0 11 8"><path d="M1 6.5L5.3 2.2L9.6 6.5" fill="none" stroke="#6a6a6a" stroke-width="2"/></svg>
<!-- document area -->
<div class="a" style="left:222px;top:347px;width:1476px;height:594px;background:#e6e6e6"></div>
<div class="a" style="left:226px;top:351px;width:16px;height:15.5px;background:#f6f6f6;border:1px solid #dadada"></div>
<svg style="left:230px;top:354px" width="9" height="9" viewBox="0 0 9 9"><path d="M2.5 1.5V6.5H7.5" fill="none" stroke="#555" stroke-width="1.6"/></svg>
<div class="a" style="left:534px;top:354px;width:856.5px;height:10.5px;background:#c6c6c6"></div>
<div class="a" style="left:646.5px;top:354px;width:554px;height:10.5px;background:#fff"></div>
<svg style="left:0;top:349px" width="1700" height="24" viewBox="0 0 1700 24" font-family="Liberation Sans,sans-serif" font-size="10" fill="#5e5e5e" text-anchor="middle">
<text x="564.6" y="13.5">2</text>
<text x="605.4" y="13.5">1</text>
<text x="687.1" y="13.5">1</text>
<text x="728.0" y="13.5">2</text>
<text x="768.8" y="13.5">3</text>
<text x="809.7" y="13.5">4</text>
<text x="850.5" y="13.5">5</text>
<text x="891.4" y="13.5">6</text>
<text x="932.2" y="13.5">7</text>
<text x="973.1" y="13.5">8</text>
<text x="1014.0" y="13.5">9</text>
<text x="1054.8" y="13.5">10</text>
<text x="1095.7" y="13.5">11</text>
<text x="1136.5" y="13.5">12</text>
<text x="1177.3" y="13.5">13</text>
<text x="1218.2" y="13.5">14</text>
<text x="1259.0" y="13.5">15</text>
<text x="1299.9" y="13.5">16</text>
<text x="1340.8" y="13.5">17</text>
<text x="1381.6" y="13.5">18</text>
<path d="M544.2 8V13M585.0 8V13M625.9 8V13M666.7 8V13M707.6 8V13M748.4 8V13M789.3 8V13M830.1 8V13M871.0 8V13M911.8 8V13M952.7 8V13M993.5 8V13M1034.4 8V13M1075.2 8V13M1116.1 8V13M1156.9 8V13M1197.8 8V13M1238.6 8V13M1279.5 8V13M1320.3 8V13M1361.2 8V13" stroke="#666" stroke-width="1"/>
<path d="M534.0 10V11.5M554.4 10V11.5M574.8 10V11.5M595.2 10V11.5M615.7 10V11.5M636.1 10V11.5M656.5 10V11.5M676.9 10V11.5M697.4 10V11.5M717.8 10V11.5M738.2 10V11.5M758.6 10V11.5M779.1 10V11.5M799.5 10V11.5M819.9 10V11.5M840.3 10V11.5M860.8 10V11.5M881.2 10V11.5M901.6 10V11.5M922.0 10V11.5M942.5 10V11.5M962.9 10V11.5M983.3 10V11.5M1003.7 10V11.5M1024.2 10V11.5M1044.6 10V11.5M1065.0 10V11.5M1085.4 10V11.5M1105.9 10V11.5M1126.3 10V11.5M1146.7 10V11.5M1167.1 10V11.5M1187.6 10V11.5M1208.0 10V11.5M1228.4 10V11.5M1248.8 10V11.5M1269.3 10V11.5M1289.7 10V11.5M1310.1 10V11.5M1330.5 10V11.5M1351.0 10V11.5M1371.4 10V11.5" stroke="#666" stroke-width="1.3"/>
<rect x="635.3" y="6" width="7" height="8.5" fill="#bdbdbd"/><path d="M635.8 6V14.5M637.8 6V14.5M639.8 6V14.5M641.8 6V14.5" stroke="#6a6a6a" stroke-width=".8"/>
<rect x="868.0" y="6" width="7" height="8.5" fill="#bdbdbd"/><path d="M868.5 6V14.5M870.5 6V14.5M872.5 6V14.5M874.5 6V14.5" stroke="#6a6a6a" stroke-width=".8"/>
<rect x="1019.3" y="6" width="7" height="8.5" fill="#bdbdbd"/><path d="M1019.8 6V14.5M1021.8 6V14.5M1023.8 6V14.5M1025.8 6V14.5" stroke="#6a6a6a" stroke-width=".8"/>
<rect x="1203.0" y="6" width="7" height="8.5" fill="#bdbdbd"/><path d="M1203.5 6V14.5M1205.5 6V14.5M1207.5 6V14.5M1209.5 6V14.5" stroke="#6a6a6a" stroke-width=".8"/>
<path d="M922.5 12V16.5H928.0" fill="none" stroke="#555" stroke-width="1.4"/>
<path d="M943.3 12V16.5H948.8" fill="none" stroke="#555" stroke-width="1.4"/>
<path d="M963.8 12V16.5H969.3" fill="none" stroke="#555" stroke-width="1.4"/>
<path d="M1045.5 12V16.5H1051.0" fill="none" stroke="#555" stroke-width="1.4"/>
<path d="M1125.9 12V16.5H1131.4" fill="none" stroke="#555" stroke-width="1.4"/>
<path d="M1208.3 12V16.5H1213.8" fill="none" stroke="#555" stroke-width="1.4"/>
<path d="M1289.5 12V16.5H1295.0" fill="none" stroke="#555" stroke-width="1.4"/>
<path d="M1371.2 12V16.5H1376.7" fill="none" stroke="#555" stroke-width="1.4"/>
<path d="M877.5 2.5H886L881.8 8.5Z M881.8 8.8L886 14.5H877.5Z M877.5 15H886V20.5H877.5Z" fill="#fafafa" stroke="#8a8a8a" stroke-width=".9"/>
<path d="M1016.8 9L1021 14.5H1012.5Z" fill="#fafafa" stroke="#8a8a8a" stroke-width=".9"/>
<path d="M1453.5 12V15.5H1450" fill="none" stroke="#555" stroke-width="1.2"/>
</svg>
<div class="a" style="left:227.5px;top:374px;width:12px;height:567px;background:#fff"></div>
<div class="a" style="left:227.5px;top:374px;width:12px;height:132.5px;background:#c6c6c6"></div>
<svg style="left:222px;top:0" width="24" height="941" viewBox="0 0 24 941" font-family="Liberation Sans,sans-serif" font-size="10" fill="#5e5e5e" text-anchor="middle">
<text transform="translate(15,382.6) rotate(-90)">3</text>
<text transform="translate(15,423.5) rotate(-90)">2</text>
<text transform="translate(15,464.3) rotate(-90)">1</text>
<text transform="translate(15,546.0) rotate(-90)">1</text>
<text transform="translate(15,586.9) rotate(-90)">2</text>
<text transform="translate(15,627.8) rotate(-90)">3</text>
<text transform="translate(15,668.6) rotate(-90)">4</text>
<text transform="translate(15,709.5) rotate(-90)">5</text>
<text transform="translate(15,750.3) rotate(-90)">6</text>
<text transform="translate(15,791.1) rotate(-90)">7</text>
<text transform="translate(15,832.0) rotate(-90)">8</text>
<text transform="translate(15,872.9) rotate(-90)">9</text>
<text transform="translate(15,913.7) rotate(-90)">10</text>
<path d="M9 403.1H14M9 443.9H14M9 484.8H14M9 525.6H14M9 566.5H14M9 607.3H14M9 648.2H14M9 689.0H14M9 729.9H14M9 770.7H14M9 811.6H14M9 852.4H14M9 893.3H14M9 934.1H14" stroke="#666" stroke-width="1"/>
<path d="M10.8 392.9H12.3M10.8 413.3H12.3M10.8 433.7H12.3M10.8 454.1H12.3M10.8 474.6H12.3M10.8 495.0H12.3M10.8 515.4H12.3M10.8 535.8H12.3M10.8 556.3H12.3M10.8 576.7H12.3M10.8 597.1H12.3M10.8 617.5H12.3M10.8 638.0H12.3M10.8 658.4H12.3M10.8 678.8H12.3M10.8 699.2H12.3M10.8 719.7H12.3M10.8 740.1H12.3M10.8 760.5H12.3M10.8 780.9H12.3M10.8 801.4H12.3M10.8 821.8H12.3M10.8 842.2H12.3M10.8 862.6H12.3M10.8 883.1H12.3M10.8 903.5H12.3M10.8 923.9H12.3" stroke="#666" stroke-width="1.3"/>
</svg>
<div class="a" style="left:227.5px;top:561.4px;width:12px;height:8.3px;background:#c6c6c6"></div>
<div class="a" style="left:227.5px;top:607.4px;width:12px;height:8.3px;background:#c6c6c6"></div>
<div class="a" style="left:227.5px;top:631.4px;width:12px;height:8.3px;background:#c6c6c6"></div>
<div class="a" style="left:227.5px;top:655.5px;width:12px;height:8.3px;background:#c6c6c6"></div>
<div class="a" style="left:227.5px;top:679.9px;width:12px;height:8.3px;background:#c6c6c6"></div>
<div class="a" style="left:227.5px;top:703.6px;width:12px;height:8.3px;background:#c6c6c6"></div>
<div class="a" style="left:227.5px;top:727.5px;width:12px;height:8.3px;background:#c6c6c6"></div>
<div class="a" style="left:227.5px;top:751.2px;width:12px;height:8.3px;background:#c6c6c6"></div>
<div class="a" style="left:227.5px;top:775.0px;width:12px;height:8.3px;background:#c6c6c6"></div>
<div class="a" style="left:227.5px;top:822.3px;width:12px;height:8.3px;background:#c6c6c6"></div>
<div class="a" style="left:227.5px;top:846.2px;width:12px;height:8.3px;background:#c6c6c6"></div>
<div class="a" style="left:227.5px;top:870.0px;width:12px;height:8.3px;background:#c6c6c6"></div>
<div class="a" style="left:227.5px;top:893.8px;width:12px;height:8.3px;background:#c6c6c6"></div>
<div class="a" style="left:227.5px;top:918.0px;width:12px;height:8.3px;background:#c6c6c6"></div>
<div class="a" style="left:1681px;top:348px;width:17px;height:593px;background:#dedde0"></div>
<div class="a" style="left:1681px;top:350.3px;width:16px;height:15.5px;background:#fff;border:1px solid #b4b4b4"></div>
<div class="a" style="left:1681px;top:924.7px;width:16px;height:15.5px;background:#fff;border:1px solid #b4b4b4"></div>
<div class="a" style="left:1681px;top:383.3px;width:16px;height:252px;background:#fff;border:1px solid #b4b4b4"></div>
<svg style="left:1682px;top:350px" width="15" height="590" viewBox="0 0 15 590"><path d="M3 10L7 5.5L11 10Z" fill="#777"/><path d="M3 580.5L7 585L11 580.5Z" fill="#777"/></svg>
<div class="a" style="left:535.5px;top:373.5px;width:856px;height:568px;background:#fff;border:1px solid #d2d2d2;border-bottom:none;border-top-color:#e9e9e9"></div>
<!-- page content -->
<svg style="left:586px;top:378px" width="130" height="80" viewBox="0 0 130 80" fill="none" stroke="#808082" stroke-linecap="round">
<path d="M48 16.5A26 26 0 1 0 34 66.2" stroke-width="2.6"/>
<path d="M48 16.5A26 26 0 0 1 64.300 41.500" stroke-width="1.600"/>
<path d="M34 66.200Q40 66.800 46 65.200" stroke-width="1.300"/>
<path d="M51.100 8.100L24.400 71.900" stroke-width="2.500"/>
<path d="M40 16C30 19 21 28 20 39C19.500 47 21 54 22.500 58" stroke-width="1.500"/>
<path d="M53 20.700C54.500 30 53 42 47.400 52C44 58 39 63 34.800 66" stroke-width="1.500"/>
<path d="M24.400 20.400C30 28 38 32 46 34C52 35.500 57 36.500 61.500 37.400" stroke-width="1.500"/>
<path d="M15.900 29.600C21 37 30 42 38 45C44 47 50 48.500 56.500 48.900" stroke-width="1.500"/>
<path d="M14.100 43C18 49 26 54 33 56.500C40 58.500 46 58.700 51.200 58.400" stroke-width="1.500"/>
<path d="M17 52Q18.500 58 21.500 61" stroke-width="1.100"/>
</svg>
<span class="t" style="transform:scaleX(1.0018);left:638px;top:419.3px;font-size:30px;font-style:italic;color:#7b7b7b;letter-spacing:-.5px;-webkit-text-stroke:.5px #7b7b7b">MDF</span>
<span class="t" style="transform:scaleX(0.8516);left:921px;top:377.5px;font-size:23.3px;font-weight:bold;-webkit-text-stroke:.7px"><span style="color:#f9b07c">C</span><span style="color:#8cb6dc">H</span><span style="color:#a8d89c">A</span><span style="color:#f2aace">N</span><span style="color:#f9b27a">G</span><span style="color:#bcbcc8">E</span></span>
<span class="t" style="transform:scaleX(0.8103);left:921px;top:402.4px;font-size:14.5px;color:#aaa4c4">THE</span>
<svg style="left:921px;top:415px" width="26" height="6" viewBox="0 0 26 6"><path d="M1 4Q7 6 13 3T24 3" fill="none" stroke="#b4b4b4" stroke-width="1"/></svg>
<span class="t" style="transform:scaleX(0.8158);left:949px;top:398.5px;font-size:23.7px;font-weight:bold;-webkit-text-stroke:.7px"><span style="color:#80aada">G</span><span style="color:#a2d8a2">A</span><span style="color:#f9b282">M</span><span style="color:#f2aad2">E</span></span>
<span class="t" style="transform:scaleX(0.8179);left:921px;top:421.3px;font-size:21.2px;color:#b2b2b6">ACADEMY</span>
<span class="t" style="transform:scaleX(1.0174);left:1092.5px;top:423.4px;font-size:22.6px;font-weight:bold;color:#828282">Different levels &amp;</span>
<span class="t" style="transform:scaleX(1.0153);left:1077.6px;top:449.4px;font-size:22.6px;font-weight:bold;color:#828282">sources of income</span>
<div class="a" style="left:595px;top:473px;width:739px;height:4px;background:#dddddd"></div>
<div class="a" style="left:625.5px;top:501.3px;width:13.3px;height:13.3px;background:#fff;border:1px solid #a8a8a8"></div>
<svg style="left:625.5px;top:501.3px" width="13.3" height="13.3" viewBox="0 0 13.3 13.3" fill="none" stroke="#555" stroke-width="1"><path d="M6.65 2.5V10.8M2.5 6.65H10.8"/><path d="M5.3 3.8L6.65 2.3L8 3.8M5.3 9.5L6.65 11L8 9.5M3.8 5.3L2.3 6.65L3.8 8M9.5 5.3L11 6.65L9.5 8" stroke-width=".8"/></svg>
<div class="a" style="left:639.75px;top:516.00px;width:569.65px;height:47.40px;background:#ffff00"></div>
<div class="a" style="left:639.00px;top:516px;width:571.00px;height:1px;background:#1e1e1e"></div>
<div class="a" style="left:639.00px;top:515px;width:571.00px;height:1px;background:rgba(20,20,20,.28)"></div>
<div class="a" style="left:639.00px;top:563px;width:571.00px;height:1px;background:#1e1e1e"></div>
<div class="a" style="left:639.00px;top:562px;width:571.00px;height:1px;background:rgba(20,20,20,.28)"></div>
<div class="a" style="left:639.00px;top:609px;width:571.00px;height:1px;background:#1e1e1e"></div>
<div class="a" style="left:639.00px;top:608px;width:571.00px;height:1px;background:rgba(20,20,20,.28)"></div>
<div class="a" style="left:639.00px;top:633px;width:571.00px;height:1px;background:#1e1e1e"></div>
<div class="a" style="left:639.00px;top:632px;width:571.00px;height:1px;background:rgba(20,20,20,.28)"></div>
<div class="a" style="left:639.00px;top:657px;width:571.00px;height:1px;background:#1e1e1e"></div>
<div class="a" style="left:639.00px;top:658px;width:571.00px;height:1px;background:rgba(20,20,20,.28)"></div>
<div class="a" style="left:639.00px;top:681px;width:571.00px;height:1px;background:#1e1e1e"></div>
<div class="a" style="left:639.00px;top:682px;width:571.00px;height:1px;background:rgba(20,20,20,.28)"></div>
<div class="a" style="left:639.00px;top:705px;width:571.00px;height:1px;background:#1e1e1e"></div>
<div class="a" style="left:639.00px;top:706px;width:571.00px;height:1px;background:rgba(20,20,20,.28)"></div>
<div class="a" style="left:639.00px;top:729px;width:571.00px;height:1px;background:#1e1e1e"></div>
<div class="a" style="left:639.00px;top:730px;width:571.00px;height:1px;background:rgba(20,20,20,.28)"></div>
<div class="a" style="left:639.00px;top:753px;width:571.00px;height:1px;background:#1e1e1e"></div>
<div class="a" style="left:639.00px;top:752px;width:571.00px;height:1px;background:rgba(20,20,20,.28)"></div>
<div class="a" style="left:639.00px;top:777px;width:571.00px;height:1px;background:#1e1e1e"></div>
<div class="a" style="left:639.00px;top:776px;width:571.00px;height:1px;background:rgba(20,20,20,.28)"></div>
<div class="a" style="left:639.00px;top:824px;width:571.00px;height:1px;background:#1e1e1e"></div>
<div class="a" style="left:639.00px;top:823px;width:571.00px;height:1px;background:rgba(20,20,20,.28)"></div>
<div class="a" style="left:639.00px;top:848px;width:571.00px;height:1px;background:#1e1e1e"></div>
<div class="a" style="left:639.00px;top:847px;width:571.00px;height:1px;background:rgba(20,20,20,.28)"></div>
<div class="a" style="left:639.00px;top:872px;width:571.00px;height:1px;background:#1e1e1e"></div>
<div class="a" style="left:639.00px;top:871px;width:571.00px;height:1px;background:rgba(20,20,20,.28)"></div>
<div class="a" style="left:639.00px;top:895px;width:571.00px;height:1px;background:#1e1e1e"></div>
<div class="a" style="left:639.00px;top:896px;width:571.00px;height:1px;background:rgba(20,20,20,.28)"></div>
<div class="a" style="left:639.00px;top:920px;width:571.00px;height:1px;background:#1e1e1e"></div>
<div class="a" style="left:639.00px;top:919px;width:571.00px;height:1px;background:rgba(20,20,20,.28)"></div>
<div class="a" style="left:639px;top:516.00px;width:1px;height:425.00px;background:#1e1e1e"></div>
<div class="a" style="left:640px;top:516.00px;width:1px;height:425.00px;background:rgba(20,20,20,.28)"></div>
<div class="a" style="left:874px;top:516.00px;width:1px;height:425.00px;background:#1e1e1e"></div>
<div class="a" style="left:873px;top:516.00px;width:1px;height:425.00px;background:rgba(20,20,20,.28)"></div>
<div class="a" style="left:1025px;top:516.00px;width:1px;height:425.00px;background:#1e1e1e"></div>
<div class="a" style="left:1026px;top:516.00px;width:1px;height:425.00px;background:rgba(20,20,20,.28)"></div>
<div class="a" style="left:1209px;top:516.00px;width:1px;height:425.00px;background:#1e1e1e"></div>
<div class="a" style="left:1208px;top:516.00px;width:1px;height:425.00px;background:rgba(20,20,20,.28)"></div>
<span class="t" style="left:648.30px;top:516.20px;font-size:20.15px;line-height:23.6px;color:#000;font-weight:bold">Sources and levels of</span>
<span class="t" style="left:648.30px;top:540.20px;font-size:20.15px;line-height:23.6px;color:#000;font-weight:bold">income</span>
<span class="t" style="left:882.50px;top:516.20px;font-size:20.15px;line-height:23.6px;color:#000;">Amount ($)</span>
<span class="t" style="left:1033.80px;top:516.20px;font-size:20.15px;line-height:23.6px;color:#000;">Percentage (%)</span>
<span class="t" style="left:648.30px;top:564.20px;font-size:20.15px;line-height:23.6px;color:#000;font-weight:bold">Domestic (Village,</span>
<span class="t" style="left:648.30px;top:587.20px;font-size:20.15px;line-height:23.6px;color:#000;font-weight:bold">District, State)</span>
<span class="t" style="left:648.30px;top:610.20px;font-size:20.15px;line-height:23.6px;color:#000;">Individuals</span>
<span class="t" style="left:882.50px;top:610.20px;font-size:20.15px;line-height:23.6px;color:#000;">50,000</span>
<span class="t" style="left:648.30px;top:634.20px;font-size:20.15px;line-height:23.6px;color:#000;">Local Companies</span>
<span class="t" style="left:882.50px;top:634.20px;font-size:20.15px;line-height:23.6px;color:#000;">1,50,000</span>
<span class="t" style="left:648.30px;top:658.20px;font-size:20.15px;line-height:23.6px;color:#000;">Volunteers</span>
<span class="t" style="left:648.30px;top:682.20px;font-size:20.15px;line-height:23.6px;color:#000;">Local government</span>
<span class="t" style="left:648.30px;top:730.20px;font-size:20.15px;line-height:23.6px;color:#000;font-weight:bold">National</span>
<span class="t" style="left:648.30px;top:754.20px;font-size:20.15px;line-height:23.6px;color:#000;">Government</span>
<span class="t" style="left:648.30px;top:778.20px;font-size:20.15px;line-height:23.6px;color:#000;">National and</span>
<span class="t" style="left:648.30px;top:801.20px;font-size:20.15px;line-height:23.6px;color:#000;">multinational companies</span>
<span class="t" style="left:648.30px;top:825.20px;font-size:20.15px;line-height:23.6px;color:#000;">Individuals</span>
<span class="t" style="left:648.30px;top:849.20px;font-size:20.15px;line-height:23.6px;color:#000;">Foundations and NGOs</span>
<span class="t" style="left:648.30px;top:896.20px;font-size:20.15px;line-height:23.6px;color:#000;font-weight:bold">International</span>
<span class="t" style="left:648.30px;top:920.20px;font-size:20.15px;line-height:23.6px;color:#000;">Governments</span>
<svg style="left:889px;top:651px" width="13" height="22" viewBox="0 0 13 22" fill="none"><path d="M3 1.5Q6 1.5 6.5 3.5Q7 1.5 10 1.5M6.5 3V19M3 20.5Q6 20.5 6.5 18.5Q7 20.5 10 20.5" stroke="#fff" stroke-width="2.6"/><path d="M3 1.5Q6 1.5 6.5 3.5Q7 1.5 10 1.5M6.5 3V19M3 20.5Q6 20.5 6.5 18.5Q7 20.5 10 20.5" stroke="#222" stroke-width="1.2"/></svg>
<!-- status bar -->
<div class="a" style="left:222px;top:941px;width:1476px;height:24px;background:#f3f3f3;border-top:1px solid #d6d6d6"></div>
<span class="t" style="transform:scaleX(0.9460);left:231px;top:946px;font-size:12.5px;color:#444">Page 1 of 1</span>
<span class="t" style="transform:scaleX(0.9954);left:312.5px;top:946px;font-size:12.5px;color:#444">35 words</span>
<svg style="left:383px;top:944px" width="18" height="16" viewBox="0 0 18 16" fill="none" stroke="#666" stroke-width="1"><path d="M8 3.5Q5 1.5 1.5 2.5V12.5Q5 11.5 8 13.5ZM8 3.5Q10.5 1.5 13.5 2.5"/><path d="M9.5 9L12 12L16 5.5" stroke-width="1.2"/></svg>
<span class="t" style="transform:scaleX(0.9982);left:418.5px;top:946px;font-size:12.5px;color:#444">English (United Kingdom)</span>
<div class="a" style="left:1430px;top:941.5px;width:41px;height:23.5px;background:#c8c8c8"></div>
<svg style="left:1398px;top:942px" width="300" height="22" viewBox="0 0 300 22" fill="none" stroke="#666" stroke-width="1">
<path d="M10.5 5Q7 3.5 4 4.5V16Q7 15 10.5 16.5Q14 15 17.5 16V4.5Q14 3.5 10.5 5ZM10.5 5V16.5"/><path d="M5.5 7.5H9M5.5 10H9M5.5 12.5H9M12 7.5H16M12 10H16M12 12.5H16" stroke-width=".7"/>
<rect x="45.5" y="4.5" width="13" height="13" fill="#fff"/><path d="M47.5 7.5H56.5M47.5 9.5H56.5M47.5 11.5H56.5M47.5 13.5H56.5M47.5 15.5H56.5" stroke-width=".7"/>
<rect x="86.5" y="4.5" width="12" height="11"/><path d="M88.5 7H96.5M88.5 9.5H96.5M88.5 12H92" stroke-width=".7"/><circle cx="97.5" cy="14.5" r="3.5" fill="#f3f3f3"/><path d="M94 14.5H101M97.5 11V18" stroke-width=".6"/>
<path d="M119.5 10.5H125.5" stroke="#444" stroke-width="1.6"/>
<path d="M130.5 10.5H238" stroke="#8a8a8a"/>
<rect x="182.5" y="5" width="4.5" height="11" fill="#666" stroke="none"/>
<path d="M241.5 10.5H248.5M245 7V14" stroke="#444" stroke-width="1.6"/>
</svg>
<span class="t" style="transform:scaleX(0.9004);left:1660.8px;top:946px;font-size:12.5px;color:#444">100%</span>
<!-- inner Windows 10 taskbar -->
<div class="a" style="left:222px;top:965px;width:1476px;height:43px;background:linear-gradient(90deg,#24353f 0,#23323f 45%,#1b2946 75%,#1a2745 100%)"></div>
<div class="a" style="left:222px;top:965px;width:52px;height:43px;background:#243842"></div>
<div class="a" style="left:274px;top:965px;width:310.5px;height:43px;background:#f2f2f2;border-top:1px solid #c4c4c4"></div>
<div class="a" style="left:640px;top:965px;width:52px;height:43px;background:#a76b3c"></div>
<div class="a" style="left:640px;top:1005px;width:52px;height:3px;background:#f2701f"></div>
<div class="a" style="left:1117px;top:965px;width:51.5px;height:43px;background:#3b4a63"></div>
<svg style="left:238px;top:977px" width="20" height="20" viewBox="0 0 20 20" fill="#fff"><path d="M1 3.5L8.5 2.5V9.5H1ZM9.5 2.3L18.5 1V9.5H9.5ZM1 10.5H8.5V17.5L1 16.5ZM9.5 10.5H18.5V19L9.5 17.7Z"/></svg>
<svg style="left:285.5px;top:976.7px" width="20" height="20" viewBox="0 0 20 20" fill="none" stroke="#333" stroke-width="1.5"><circle cx="12" cy="8" r="5"/><path d="M8.3 11.7L2 18"/></svg>
<span class="t" style="transform:scaleX(0.9723);left:317.5px;top:979.8px;font-size:16px;color:#333">Type here to search</span>
<svg style="left:598px;top:975px" width="24" height="22" viewBox="0 0 24 22" fill="none" stroke="#fff" stroke-width="1.3"><rect x="5.5" y="5.5" width="10" height="9"/><path d="M3 2.5H17.5M3 17.5H17.5M3 2.5V5M3 15V17.5M17.5 2.5V5M17.5 15V17.5"/><path d="M20.5 3V5M20.5 8V17" stroke-width="1.6"/></svg>
<!-- app icons -->
<svg style="left:652px;top:972px" width="30" height="30" viewBox="0 0 30 30"><rect x="11" y="5" width="13" height="13" fill="#fff"/><path d="M11 6L17.5 11L24 6" fill="none" stroke="#1a73c8" stroke-width="1.5"/><path d="M1.5 4L14.5 1.5V24.5L1.5 22Z" fill="#1a73c8"/><ellipse cx="8" cy="13" rx="3.3" ry="4.3" fill="none" stroke="#fff" stroke-width="2"/><rect x="13" y="15" width="15" height="11" fill="#f0c88c"/><path d="M13 15L20.5 21.5L28 15" fill="none" stroke="#fff" stroke-width="1.2"/></svg>
<svg style="left:705px;top:974px" width="28" height="26" viewBox="0 0 28 26"><path d="M1.5 4.5Q1.5 3 3 3H10L12.5 5.5H24.5Q26 5.5 26 7V9H1.5Z" fill="#e8a922"/><rect x="1.5" y="7.5" width="24.5" height="14.5" rx="1" fill="#fbd568"/><path d="M8 15H19.5V22H8Z" fill="#4a98e0"/><path d="M10.5 17.5H17V22H10.5Z" fill="#fbd568"/></svg>
<svg style="left:758px;top:973px" width="28" height="28" viewBox="0 0 28 28"><circle cx="14" cy="14" r="12.5" fill="#1d84d6"/><path d="M2 16Q2 6 12 3Q22 1 26 10Q26.5 14 22 14.5H12Q11 9 16 8Q9 7 6 13Q4 19 10 24Q4 22 2 16Z" fill="#35c1a0"/><path d="M10 14.5Q9 22 17 23.5Q22 24 25 20Q20 23 15.5 20Q12 17.5 13 14.5Z" fill="#0f5fb0"/><path d="M12 14.5H22.5Q26 14 26 10.5Q24 5 17 5Q10 6 10 14.5Z" fill="#2aa7e6" opacity=".6"/></svg>
<svg style="left:811px;top:973px" width="28" height="28" viewBox="0 0 28 28"><circle cx="14" cy="14" r="13" fill="#0b5cff"/><path d="M8 8H20L11.5 19.5H20.5" fill="none" stroke="#fff" stroke-width="3" stroke-linejoin="round" stroke-linecap="round"/></svg>
<svg style="left:863px;top:974px" width="28" height="26" viewBox="0 0 28 26"><path d="M9 2H22L19 11H6Z" fill="#f4f4f4" stroke="#9a9a9a" stroke-width=".8"/><path d="M2 13L6 9.5H21L25 13V20H2Z" fill="#b4b8bc"/><path d="M2 13H25V20H2Z" fill="#8e9499"/><rect x="6" y="16" width="13" height="6" fill="#3c4043"/><path d="M8 18H17M8 20H17" stroke="#ddd" stroke-width=".8"/><circle cx="22" cy="15.5" r="1" fill="#6fdc6f"/></svg>
<svg style="left:916px;top:973px" width="30" height="30" viewBox="0 0 30 30" id="chr"><circle cx="13" cy="13" r="12" fill="#e33b2e"/><path d="M13 13L2.6 7A12 12 0 0 0 9 24.3Z" fill="#2da94f"/><path d="M13 13L9 24.3A12 12 0 0 0 23.4 7H13Z" fill="#fcc31e"/><path d="M13 1A12 12 0 0 1 23.4 7H13Z" fill="#e33b2e"/><circle cx="13" cy="13" r="5.6" fill="#fff"/><circle cx="13" cy="13" r="4.4" fill="#3f86f1"/></svg>
<svg style="left:930px;top:985px" width="16" height="16" viewBox="0 0 16 16"><circle cx="8" cy="8" r="7.5" fill="#6e4a3c"/><circle cx="8" cy="7" r="4" fill="#d8a88c"/><path d="M2.5 13Q8 8.5 13.5 13Q8 17.5 2.5 13Z" fill="#3a3a44"/><path d="M4 5.5Q8 1 12 5.5Q8 3.5 4 5.5Z" fill="#2a2220"/></svg>
<svg style="left:970px;top:973px" width="28" height="28" viewBox="0 0 28 28"><ellipse cx="14" cy="14" rx="12" ry="12.5" fill="#ea1b2b"/><ellipse cx="14" cy="14" rx="5" ry="9" fill="#25333e"/><ellipse cx="15.5" cy="14" rx="4.5" ry="9" fill="#b20f1d" opacity=".35"/></svg>
<svg style="left:1022px;top:973px" width="30" height="30" viewBox="0 0 30 30"><circle cx="13" cy="13" r="12" fill="#e33b2e"/><path d="M13 13L2.6 7A12 12 0 0 0 9 24.3Z" fill="#2da94f"/><path d="M13 13L9 24.3A12 12 0 0 0 23.4 7H13Z" fill="#fcc31e"/><path d="M13 1A12 12 0 0 1 23.4 7H13Z" fill="#e33b2e"/><circle cx="13" cy="13" r="5.6" fill="#fff"/><circle cx="13" cy="13" r="4.4" fill="#3f86f1"/><circle cx="21.5" cy="21.5" r="7" fill="#f25c1e"/><text x="21.5" y="25" font-family="Liberation Sans,sans-serif" font-size="9.5" font-weight="bold" fill="#fff" text-anchor="middle">M</text></svg>
<svg style="left:1075px;top:974px" width="30" height="26" viewBox="0 0 30 26"><rect x="11" y="3" width="16" height="20" fill="#fff" stroke="#1e7145" stroke-width="1"/><path d="M14 6.5H25M14 10H25M14 13.5H25M14 17H25M14 20H25M19.5 4V22" stroke="#1e7145" stroke-width=".9"/><path d="M1 3L15 .5V25.5L1 23Z" fill="#1e7145"/><path d="M4.5 8L11 18M11 8L4.5 18" stroke="#fff" stroke-width="2"/></svg>
<svg style="left:1128px;top:974px" width="30" height="26" viewBox="0 0 30 26"><rect x="11" y="3" width="16" height="20" fill="#fff" stroke="#2b579a" stroke-width="1"/><path d="M17 7H25M17 10H25M17 13H25M17 16H25M17 19H25" stroke="#2b579a" stroke-width="1.1"/><path d="M1 3L15 .5V25.5L1 23Z" fill="#2b579a"/><path d="M3.5 8.5L5.5 17.5L8 10L10.5 17.5L12.5 8.5" stroke="#fff" stroke-width="1.6" fill="none" stroke-linejoin="round"/></svg>
<svg style="left:1180px;top:974px" width="30" height="26" viewBox="0 0 30 26"><rect x="11" y="3" width="16" height="20" fill="#fbe9e2" stroke="#d24726" stroke-width="1"/><path d="M17 14H25M17 17H25M17 20H25" stroke="#d24726" stroke-width="1.1"/><rect x="17.5" y="6" width="7" height="5" fill="none" stroke="#d24726"/><path d="M1 3L15 .5V25.5L1 23Z" fill="#d24726"/><path d="M5.5 18.5V8H9Q12 8 12 11Q12 14 9 14H5.5" stroke="#fff" stroke-width="1.9" fill="none"/></svg>
<!-- running underlines -->
<svg style="left:222px;top:1004px" width="1476" height="4" viewBox="0 0 1476 4" fill="#76b9ed"><rect x="475" y="1.5" width="34" height="2.5"/><rect x="510.5" y="1.5" width="8" height="2.5"/><rect x="528" y="1.5" width="43.5" height="2.5"/><rect x="581.5" y="1.5" width="34" height="2.5"/><rect x="617" y="1.5" width="8" height="2.5"/><rect x="687" y="1.5" width="43" height="2.5"/><rect x="793" y="1.5" width="43" height="2.5"/><rect x="846" y="1.5" width="34" height="2.5"/><rect x="881.5" y="1.5" width="8" height="2.5"/><rect x="895" y="1.5" width="51.5" height="2.5"/><rect x="952" y="1.5" width="34" height="2.5"/><rect x="987.5" y="1.5" width="8" height="2.5"/></svg>
<!-- tray -->
<svg style="left:1282px;top:973px" width="30" height="26" viewBox="0 0 30 26"><circle cx="19.5" cy="9" r="6" fill="#f5a63a"/><path d="M6 22Q1.5 22 1.5 18Q1.5 14.5 5.5 14Q6.5 9.5 11.5 9.5Q15.5 9.5 17 13Q22.5 12.5 23 17.5Q23 22 18.5 22Z" fill="#dfe6f4"/><path d="M6 22Q1.5 22 1.5 18.5Q8 21 14 19Q20 17 23 17.5Q23 22 18.5 22Z" fill="#b9c6e4"/></svg>
<span class="t w" style="transform:scaleX(0.9249);left:1318px;top:978.5px;font-size:15px">32°C</span>
<svg style="left:1374px;top:975px" width="160" height="24" viewBox="0 0 160 24" fill="none" stroke="#fff" stroke-width="1.3">
<path d="M3.5 14.5L9.5 8.5L15.5 14.5" stroke-width="1.5"/>
<path d="M28.5 18Q28.5 8 41 7.5M31.5 18Q32 11 41 10.5M34.5 18Q35 14 41 13.5" stroke-width="1.2"/><circle cx="39.5" cy="17.5" r="1.3" fill="#fff" stroke="none"/>
<rect x="56.5" y="7.5" width="8.5" height="8" rx="2"/><path d="M65 10.5L68.5 8.5V14.5L65 12.5M57.5 4.5Q61 3 65.5 4.5M57.5 18.5Q61 20 65.5 18.5" stroke-width="1.1"/>
<rect x="84.5" y="3.5" width="6" height="11" rx="3" fill="#fff"/><path d="M81.5 11.5Q82 16.5 87.5 16.5Q93 16.5 93.5 11.5M87.5 16.5V20M84.5 20.5H90.5" stroke-width="1.2"/>
<rect x="108.5" y="8.5" width="13" height="8"/><rect x="110" y="10" width="6" height="5" fill="#fff" stroke="none"/><path d="M121.5 11V14H123V11ZM105.5 4V9M108.5 4V9M104.5 8.5H109.5V10.5Q107 13 104.5 10.5Z" stroke-width="1"/>
<path d="M132.5 10H135.5L139.5 6V18L135.5 14H132.5Z" stroke-width="1.1"/><path d="M142 9.5Q143.5 12 142 14.5M144.5 7.5Q147 12 144.5 16.5M147 6Q150.5 12 147 18" stroke-width="1" opacity=".85"/>
</svg>
<span class="t w" style="transform:scaleX(0.9052);left:1532.7px;top:980px;font-size:13px">ENG</span>
<span class="t w" style="transform:scaleX(0.8910);left:1588.2px;top:969.5px;font-size:13px">12:45</span>
<span class="t w" style="transform:scaleX(0.9474);left:1571.2px;top:989.5px;font-size:13px">21-06-2023</span>
<svg style="left:1651px;top:973px" width="28" height="28" viewBox="0 0 28 28"><path d="M3.5 3.5H20.5V16.5H10L6.5 20V16.5H3.5Z" fill="#fff"/><path d="M6.5 7H17.5M6.5 10H17.5M6.5 13H14" stroke="#1b2946" stroke-width="1.1"/><circle cx="19" cy="21" r="7.5" fill="#2b3448" stroke="#8a8a8a" stroke-width="1.2"/><text x="19" y="24.8" font-family="Liberation Sans,sans-serif" font-size="10.5" font-weight="bold" fill="#fff" text-anchor="middle">1</text></svg>
<div class="a" style="left:1692.5px;top:965px;width:1px;height:43px;background:#5a6578"></div>
<!-- Windows 11 taskbar -->
<div class="a" style="left:0;top:1008px;width:1920px;height:72px;background:#cee4ec;border-top:1px solid #b4c6ce"></div>
<svg style="left:28px;top:1026px" width="40" height="38" viewBox="0 0 40 38"><defs><linearGradient id="cl" x1="0" y1="0" x2="0" y2="1"><stop offset="0" stop-color="#f4f7fd"/><stop offset="1" stop-color="#a9b9e6"/></linearGradient><linearGradient id="sn" x1="0" y1="0" x2="1" y2="1"><stop offset="0" stop-color="#fbb53a"/><stop offset="1" stop-color="#f07b1c"/></linearGradient></defs><circle cx="26.5" cy="11" r="8" fill="url(#sn)"/><path d="M9 33Q2 33 2 26.5Q2 21 8 20.5Q9.5 13.5 17 13.5Q23 13.5 25.5 19Q29 17.5 32 20Q36.5 20.5 37 26Q37 33 30 33Z" fill="url(#cl)"/></svg>
<span class="t" style="transform:scaleX(0.9100);left:76.7px;top:1022.5px;font-size:18px;color:#1b1b1b">32°C</span>
<span class="t" style="transform:scaleX(1.0298);left:76.7px;top:1047px;font-size:18px;color:#4c4c4c">Mostly cloudy</span>
<svg style="left:388px;top:1027px" width="35" height="35" viewBox="0 0 35 35"><defs><linearGradient id="wl" x1="0" y1="0" x2="1" y2="1"><stop offset="0" stop-color="#5ad0f7"/><stop offset="1" stop-color="#0a6fd0"/></linearGradient></defs><path d="M.3 .3H16.5V16.5H.3ZM18.2 .3H34.4V16.5H18.2ZM.3 18.2H16.5V34.4H.3ZM18.2 18.2H34.4V34.4H18.2Z" fill="url(#wl)"/></svg>
<div class="a" style="left:445px;top:1021.5px;width:327px;height:44.5px;border-radius:22.3px;background:#ebf4f8;border:1px solid #b9cad2;box-shadow:0 1px 1.5px rgba(0,0,0,.12)"></div>
<svg style="left:458px;top:1030px" width="28" height="28" viewBox="0 0 28 28" fill="none" stroke="#1c1c1c" stroke-width="2.2" stroke-linecap="round"><circle cx="11.5" cy="11.5" r="7.8"/><path d="M17.5 17.5L23.5 23.5"/></svg>
<span class="t" style="transform:scaleX(0.8749);left:499px;top:1033.7px;font-size:22px;color:#585858">Search</span>
<svg style="left:733px;top:1027px" width="34" height="34" viewBox="0 0 34 34" fill="none"><path d="M16.5 2.5A14 14 0 1 1 7 27L2.5 30.5L4 23.5A14 14 0 0 1 16.5 2.5Z" stroke="#1a8fe8" stroke-width="1.8"/><path d="M12.5 7.5V22.5L17 25L23 21.5V17L17.5 14.5" stroke="#1573d8" stroke-width="2.8" stroke-linejoin="round" stroke-linecap="round"/></svg>
<!-- task view -->
<div class="a" style="left:790.7px;top:1036px;width:26.7px;height:24.7px;border-radius:3px;background:linear-gradient(180deg,#3a3a3a,#111)"></div>
<div class="a" style="left:800px;top:1027.3px;width:26.7px;height:24.5px;border-radius:3px;background:linear-gradient(160deg,rgba(255,255,255,.92),rgba(232,238,241,.72));border:1px solid rgba(255,255,255,.6)"></div>
<!-- teams chat -->
<svg style="left:856px;top:1026px" width="38" height="38" viewBox="0 0 38 38"><defs><linearGradient id="tm" x1="0" y1="0" x2="1" y2="1"><stop offset="0" stop-color="#8b8be6"/><stop offset="1" stop-color="#5b54c8"/></linearGradient></defs><path d="M18.5 1.5A16.5 16.5 0 1 1 9 32L2 35L4.5 27.5A16.5 16.5 0 0 1 18.5 1.5Z" fill="url(#tm)"/><rect x="9.5" y="12" width="12.5" height="11.5" rx="2.5" fill="#fff"/><path d="M23 16L28.5 12.5V23L23 19.5Z" fill="#fff"/></svg>
<!-- explorer -->
<svg style="left:922px;top:1027px" width="38" height="35" viewBox="0 0 38 35"><path d="M1 4Q1 1.5 3.5 1.5H13L16.5 5H34.5Q37 5 37 7.5V12H1Z" fill="#e6a417"/><rect x="1" y="7" width="36" height="26.5" rx="2.5" fill="#fcd462"/><path d="M1 24H37V31Q37 33.5 34.5 33.5H3.5Q1 33.5 1 31Z" fill="#f6be35"/><path d="M9 22Q9 20 11 20H27Q29 20 29 22V33.5H9Z" fill="#1879d4"/><rect x="13.5" y="24.5" width="11" height="2.5" rx="1" fill="#0d4f9a"/></svg>
<!-- chrome -->
<svg style="left:988px;top:1025.5px" width="38" height="38" viewBox="0 0 38 38"><circle cx="19" cy="19" r="18" fill="#e33b2e"/><path d="M19 19L3.4 10A18 18 0 0 0 13 36Z" fill="#2da94f"/><path d="M19 19L13 36A18 18 0 0 0 34.6 10H19Z" fill="#fcc31e"/><path d="M19 1A18 18 0 0 1 34.6 10H19Z" fill="#e33b2e"/><circle cx="19" cy="19" r="8.4" fill="#fff"/><circle cx="19" cy="19" r="6.6" fill="#3f86f1"/></svg>
<!-- sticky notes -->
<svg style="left:1056px;top:1028px" width="34" height="33" viewBox="0 0 34 33"><rect x=".7" y=".5" width="32.5" height="32" rx="2" fill="#2e2e2e"/><path d="M33.2 15L16 32.5H31Q33.2 32.5 33.2 30.5Z" fill="#ffd60a"/></svg>
<!-- whatsapp -->
<svg style="left:1120px;top:1025px" width="38" height="38" viewBox="0 0 38 38"><path d="M19 1.5A17 17 0 1 1 10 33L2 36L5 28A17 17 0 0 1 19 1.5Z" fill="#fff"/><path d="M19 3.5A15 15 0 1 1 10.5 31L5 33L7 27.5A15 15 0 0 1 19 3.5Z" fill="#3ec44f"/><path d="M13.5 10.5L16 10L18 14.5L16 16.5Q18 20.5 21.5 22L23.5 20L28 22L27.5 24.5Q25.5 27.5 21 26Q13 22.5 11 15Q10.5 12 13.5 10.5Z" fill="#fff"/></svg>
<!-- todo -->
<svg style="left:1186px;top:1029px" width="38" height="32" viewBox="0 0 38 32"><path d="M1 14.5L7.5 8L19 19.5L12.5 26Z" fill="#195abd"/><path d="M12.5 26L6.5 20L29 1L36 8Z" fill="#3a96e8"/></svg>
<!-- chrome with badge -->
<svg style="left:1252px;top:1025.5px" width="46" height="38" viewBox="0 0 46 38"><circle cx="19" cy="19" r="18" fill="#e33b2e"/><path d="M19 19L3.4 10A18 18 0 0 0 13 36Z" fill="#2da94f"/><path d="M19 19L13 36A18 18 0 0 0 34.6 10H19Z" fill="#fcc31e"/><path d="M19 1A18 18 0 0 1 34.6 10H19Z" fill="#e33b2e"/><circle cx="19" cy="19" r="8.4" fill="#fff"/><circle cx="19" cy="19" r="6.6" fill="#3f86f1"/><circle cx="33" cy="5.5" r="11" fill="#f4511e"/><text x="33" y="11" font-family="Liberation Sans,sans-serif" font-size="15" fill="#fff" text-anchor="middle">S</text></svg>
<!-- word -->
<svg style="left:1318px;top:1026px" width="38" height="36" viewBox="0 0 38 36"><path d="M10 3Q10 1.5 11.5 1.5H34.5Q36 1.5 36 3V10H10Z" fill="#41a5ee"/><rect x="10" y="10" width="26" height="8.5" fill="#2b7cd3"/><rect x="10" y="18.5" width="26" height="8.5" fill="#185abd"/><path d="M10 27H36V32.5Q36 34 34.5 34H11.5Q10 34 10 32.5Z" fill="#103f91"/><rect x="1" y="8.5" width="19" height="19" rx="1.8" fill="#185abd"/><path d="M5 13L7.5 23L10.5 14.5L13.5 23L16 13" stroke="#fff" stroke-width="2" fill="none" stroke-linejoin="round" stroke-linecap="round"/></svg>
<!-- zoom active -->
<div class="a" style="left:1375px;top:1016.5px;width:56px;height:55.5px;border-radius:5px;background:#e4f0f5;border:1px solid #d3e2e8"></div>
<div class="a" style="left:1385px;top:1026px;width:36px;height:36px;border-radius:13px;background:linear-gradient(180deg,#2a82ff,#0b5cff)"></div>
<span class="t w" style="transform:scaleX(0.8700);left:1390.5px;top:1037px;font-size:11px;font-weight:bold">zoom</span>
<div class="a" style="left:1391px;top:1068.3px;width:24px;height:4px;border-radius:2px;background:#1a8796"></div>
<div class="a" style="left:1135px;top:1069px;width:8px;height:3.5px;border-radius:2px;background:#8a9498"></div>
<div class="a" style="left:1267px;top:1069px;width:8px;height:3.5px;border-radius:2px;background:#8a9498"></div>
<div class="a" style="left:1333px;top:1069px;width:8px;height:3.5px;border-radius:2px;background:#8a9498"></div>
<!-- tray -->
<svg style="left:1468px;top:1028px" width="320" height="34" viewBox="0 0 320 34" fill="none" stroke="#1c1c1c" stroke-width="1.6" stroke-linecap="round" stroke-linejoin="round">
<path d="M4 20L11 13L18 20" stroke-width="1.9"/>
<path d="M52 23.5Q47 23.5 47 19.5Q47 16 51 15.5Q52.5 9.5 58.5 9.5Q63.5 9.5 65 14Q71 14 71 19Q71 23.5 66 23.5Z" fill="#7b7b7b" stroke="#1c1c1c" stroke-width="1.5"/><path d="M50 22Q60 15 70 18" stroke="#ddd" stroke-width="1" opacity=".6"/>
<rect x="102.5" y="6" width="9" height="15" rx="4.5" stroke="#1a7c8c" stroke-width="1.8"/><path d="M99 16Q99.5 24.5 107 24.5Q114.5 24.5 115 16M107 24.5V28.5" stroke="#1a7c8c" stroke-width="1.8"/>
<path d="M210.5 13.5Q221 4.5 231.5 13.5M214 17.5Q221 11.5 228 17.5M217.5 21.2Q221 18.5 224.5 21.2" stroke-width="1.6"/><circle cx="221" cy="23.3" r="1.5" fill="#1c1c1c" stroke="none"/>
<path d="M245.5 13.5H249L254.5 8.5V24.5L249 19.5H245.5Z" stroke-width="1.5"/><path d="M258 13Q260 16.5 258 20M261.5 10.5Q265 16.5 261.5 22.5M265 8.5Q269.5 16.5 265 24.5" stroke-width="1.4"/>
<rect x="282" y="10" width="20" height="12.5" rx="2.5" stroke-width="1.5"/><path d="M303.5 14V18.5" stroke-width="2.2"/><rect x="284.5" y="12.5" width="6" height="7.5" rx="1" fill="#1c1c1c" stroke="none"/>
</svg>
<span class="t" style="transform:scaleX(0.9041);left:1615px;top:1026px;font-size:17.5px;color:#1b1b1b">ENG</span>
<span class="t" style="transform:scaleX(0.9943);left:1623.3px;top:1048.7px;font-size:17.5px;color:#1b1b1b">IN</span>
<span class="t" style="transform:scaleX(0.9818);left:1847.7px;top:1024.3px;font-size:17.5px;color:#1b1b1b">12:45</span>
<span class="t" style="transform:scaleX(1.0320);left:1798.3px;top:1047.7px;font-size:17.5px;color:#1b1b1b">21-06-2023</span>
<div class="a" style="left:1910px;top:1032.5px;width:2px;height:23.5px;background:#7f8f96;border-radius:1px"></div>
<!-- tooltip -->
<div class="a" style="left:1776.5px;top:944px;width:146px;height:45px;border-radius:5px;background:#e6e6e6;border:1px solid #cfcfcf"></div>
<span class="t" style="transform:scaleX(0.9073);left:1790px;top:955.7px;font-size:20px;color:#1b1b1b">Show desktop</span>
</body></html>
